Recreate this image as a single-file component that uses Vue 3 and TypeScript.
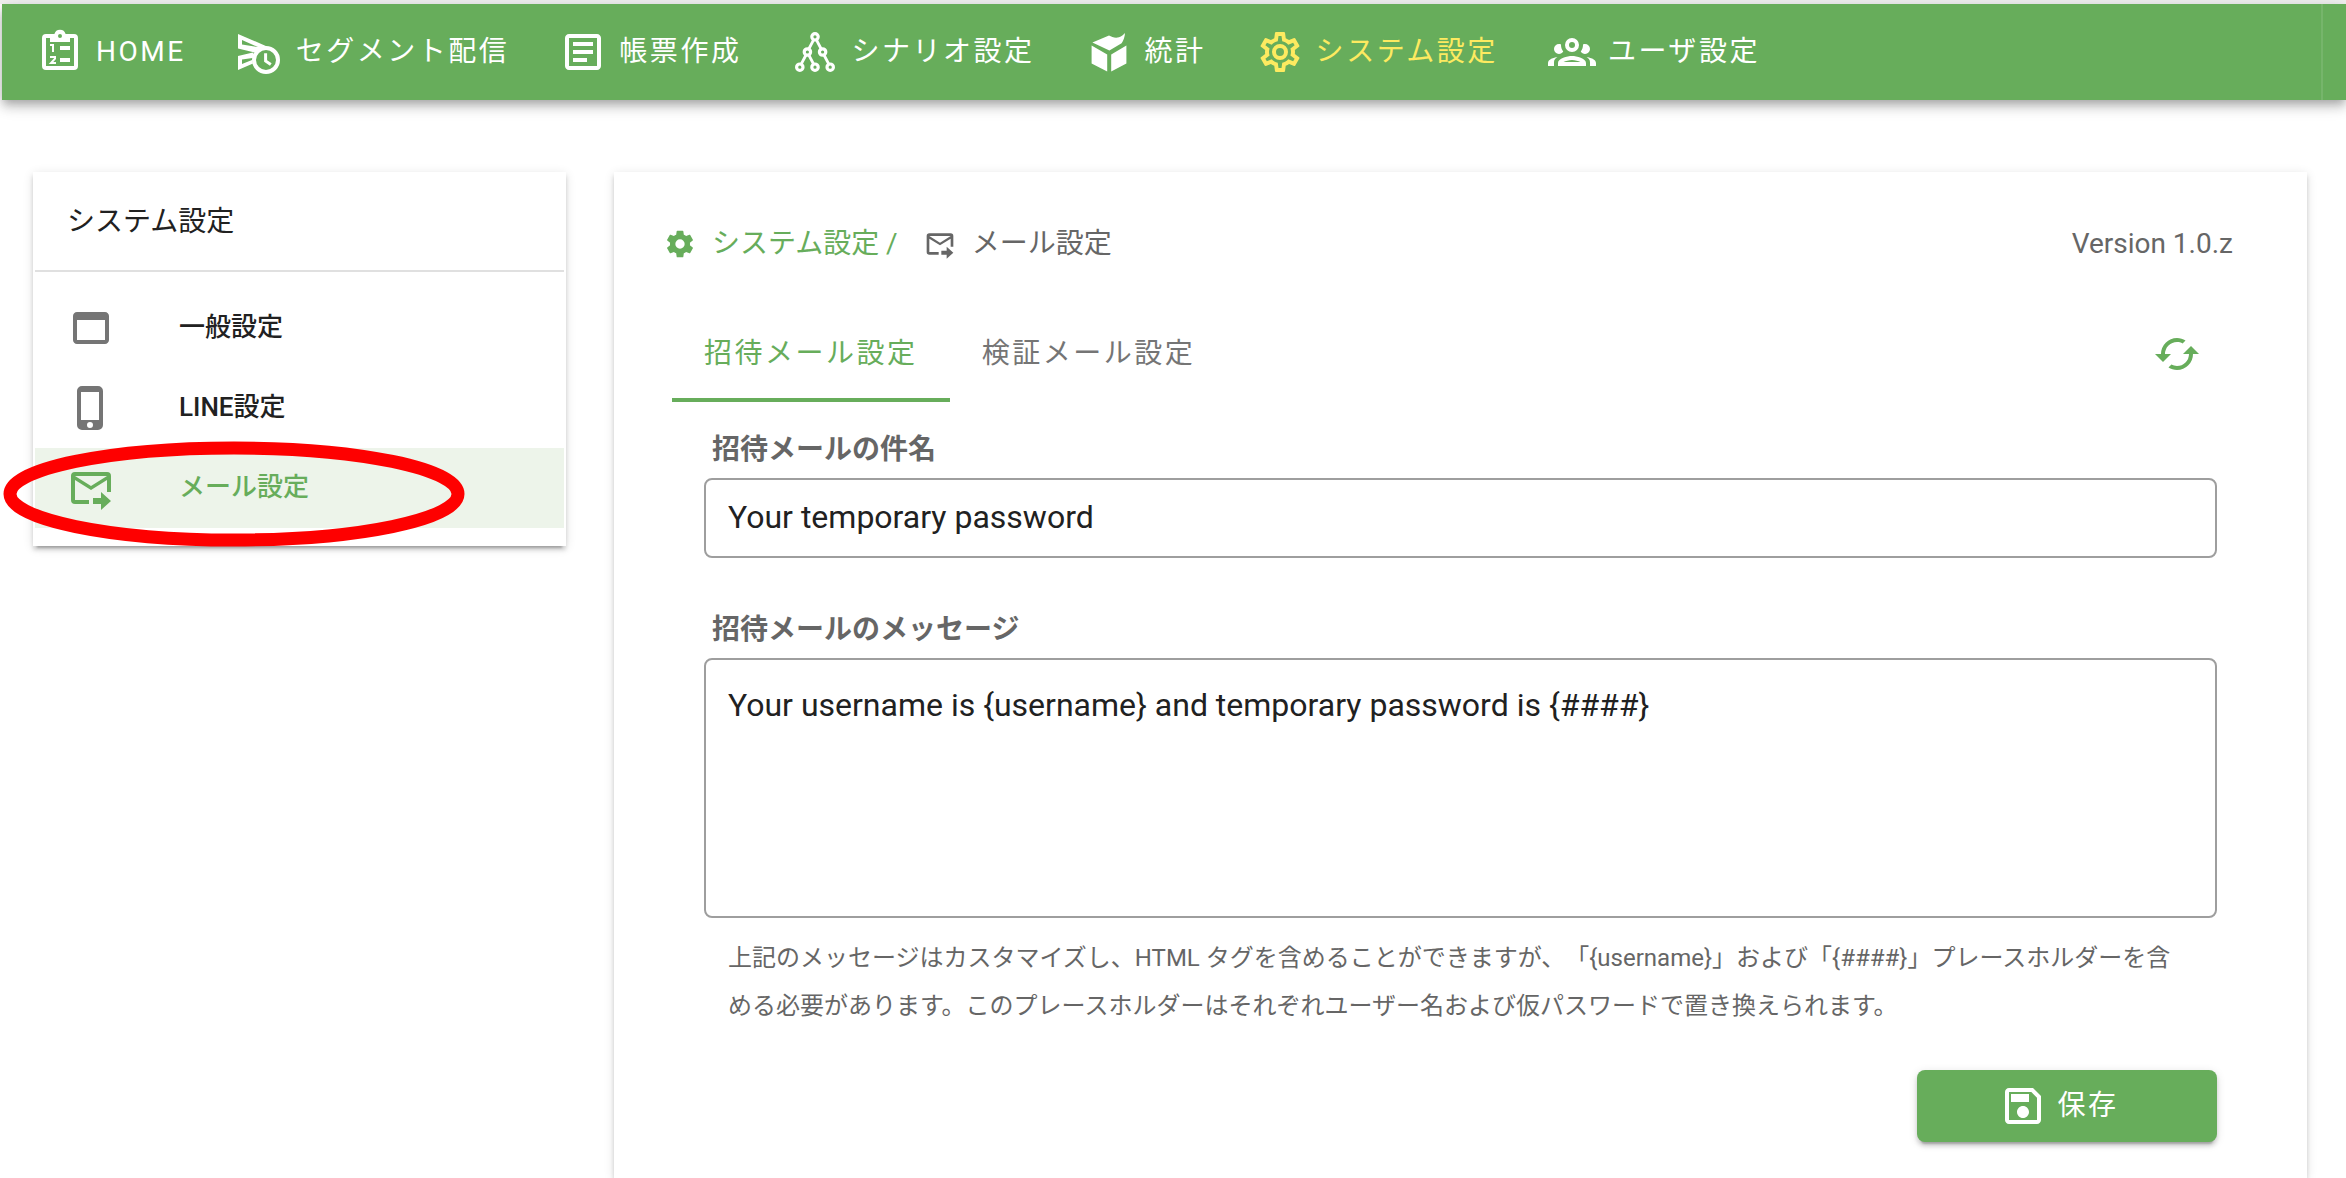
<script setup lang="ts">
import { ref } from 'vue'

interface NavItem {
  id: string
  label: string
  active?: boolean
}

interface MenuItem {
  label: string
  icon: string
  active?: boolean
}

const ICONS = {
  textBox:
    'M5,3C3.89,3 3,3.89 3,5V19C3,20.11 3.89,21 5,21H19C20.11,21 21,20.11 21,19V5C21,3.89 20.11,3 19,3H5M5,5H19V19H5V5M7,7V9H17V7H7M7,11V13H17V11H7M7,15V17H14V15H7Z',
  box: 'M3.3 8.8L11.1 13.2V21.8L3.3 17.7ZM13.1 13.2L20.7 8.8V17.7L13.1 21.8ZM3.7 7.2L12 3.8C13.5 4.6 15.3 5.2 17 4.6C18.3 4.2 19.2 3.4 20 2.5C19.9 4.4 19.3 6.2 18.3 7.6L12.2 11.3Z',
  cogOutline:
    'M12,8A4,4 0 0,1 16,12A4,4 0 0,1 12,16A4,4 0 0,1 8,12A4,4 0 0,1 12,8M12,10A2,2 0 0,0 10,12A2,2 0 0,0 12,14A2,2 0 0,0 14,12A2,2 0 0,0 12,10M10,22C9.75,22 9.54,21.82 9.5,21.58L9.13,18.93C8.5,18.68 7.96,18.34 7.44,17.94L4.95,18.95C4.73,19.03 4.46,18.95 4.34,18.73L2.34,15.27C2.21,15.05 2.27,14.78 2.46,14.63L4.57,12.97L4.5,12L4.57,11L2.46,9.37C2.27,9.22 2.21,8.95 2.34,8.73L4.34,5.27C4.46,5.05 4.73,4.96 4.95,5.05L7.44,6.05C7.96,5.66 8.5,5.32 9.13,5.07L9.5,2.42C9.54,2.18 9.75,2 10,2H14C14.25,2 14.46,2.18 14.5,2.42L14.87,5.07C15.5,5.32 16.04,5.66 16.56,6.05L19.05,5.05C19.27,4.96 19.54,5.05 19.66,5.27L21.66,8.73C21.79,8.95 21.73,9.22 21.54,9.37L19.43,11L19.5,12L19.43,13L21.54,14.63C21.73,14.78 21.79,15.05 21.66,15.27L19.66,18.73C19.54,18.95 19.27,19.04 19.05,18.95L16.56,17.95C16.04,18.34 15.5,18.68 14.87,18.93L14.5,21.58C14.46,21.82 14.25,22 14,22H10M11.25,4L10.88,6.61C9.68,6.86 8.62,7.5 7.85,8.39L5.44,7.35L4.69,8.65L6.8,10.2C6.4,11.37 6.4,12.64 6.8,13.8L4.68,15.36L5.43,16.66L7.86,15.62C8.63,16.5 9.68,17.14 10.87,17.38L11.24,20H12.76L13.13,17.39C14.32,17.14 15.37,16.5 16.14,15.62L18.57,16.66L19.32,15.36L17.2,13.81C17.6,12.64 17.6,11.37 17.2,10.2L19.31,8.65L18.56,7.35L16.15,8.39C15.38,7.5 14.32,6.86 13.12,6.62L12.75,4H11.25Z',
  cog: 'M12,15.5A3.5,3.5 0 0,1 8.5,12A3.5,3.5 0 0,1 12,8.5A3.5,3.5 0 0,1 15.5,12A3.5,3.5 0 0,1 12,15.5M19.43,12.97C19.47,12.65 19.5,12.33 19.5,12C19.5,11.67 19.47,11.34 19.43,11L21.54,9.37C21.73,9.22 21.78,8.95 21.66,8.73L19.66,5.27C19.54,5.05 19.27,4.96 19.05,5.05L16.56,6.05C16.04,5.66 15.5,5.32 14.87,5.07L14.5,2.42C14.46,2.18 14.25,2 14,2H10C9.75,2 9.54,2.18 9.5,2.42L9.13,5.07C8.5,5.32 7.96,5.66 7.44,6.05L4.95,5.05C4.73,4.96 4.46,5.05 4.34,5.27L2.34,8.73C2.21,8.95 2.27,9.22 2.46,9.37L4.57,11C4.53,11.34 4.5,11.67 4.5,12C4.5,12.33 4.53,12.65 4.57,12.97L2.46,14.63C2.27,14.78 2.21,15.05 2.34,15.27L4.34,18.73C4.46,18.95 4.73,19.03 4.95,18.95L7.44,17.94C7.96,18.34 8.5,18.68 9.13,18.93L9.5,21.58C9.54,21.82 9.75,22 10,22H14C14.25,22 14.46,21.82 14.5,21.58L14.87,18.93C15.5,18.67 16.04,18.34 16.56,17.94L19.05,18.95C19.27,19.03 19.54,18.95 19.66,18.73L21.66,15.27C21.78,15.05 21.73,14.78 21.54,14.63L19.43,12.97Z',
  group:
    'M12,5A3.5,3.5 0 0,0 8.5,8.5A3.5,3.5 0 0,0 12,12A3.5,3.5 0 0,0 15.5,8.5A3.5,3.5 0 0,0 12,5M12,7A1.5,1.5 0 0,1 13.5,8.5A1.5,1.5 0 0,1 12,10A1.5,1.5 0 0,1 10.5,8.5A1.5,1.5 0 0,1 12,7M5.5,8A2.5,2.5 0 0,0 3,10.5C3,11.44 3.53,12.25 4.29,12.68C4.65,12.88 5.06,13 5.5,13C5.94,13 6.35,12.88 6.71,12.68C7.08,12.47 7.39,12.17 7.62,11.81C6.89,10.86 6.5,9.7 6.5,8.5C6.5,8.41 6.5,8.31 6.5,8.22C6.2,8.08 5.86,8 5.5,8M18.5,8C18.14,8 17.8,8.08 17.5,8.22C17.5,8.31 17.5,8.41 17.5,8.5C17.5,9.7 17.11,10.86 16.38,11.81C16.5,12 16.63,12.15 16.78,12.3C16.94,12.45 17.1,12.58 17.29,12.68C17.65,12.88 18.06,13 18.5,13C18.94,13 19.35,12.88 19.71,12.68C20.47,12.25 21,11.44 21,10.5A2.5,2.5 0 0,0 18.5,8M12,14C9.66,14 5,15.17 5,17.5V19H19V17.5C19,15.17 14.34,14 12,14M4.71,14.55C2.78,14.78 0,15.76 0,17.5V19H3V17.07C3,16.06 3.69,15.22 4.71,14.55M19.29,14.55C20.31,15.22 21,16.06 21,17.07V19H24V17.5C24,15.76 21.22,14.78 19.29,14.55M12,16C13.53,16 15.24,16.5 16.23,17H7.77C8.76,16.5 10.47,16 12,16Z',
  window:
    'M19 4H5C3.89 4 3 4.9 3 6V18C3 19.1 3.89 20 5 20H19C20.1 20 21 19.1 21 18V6C21 4.9 20.1 4 19 4M19 18H5V8H19V18Z',
  phone:
    'M16,18H7V4H16M11.5,22A1.5,1.5 0 0,1 10,20.5A1.5,1.5 0 0,1 11.5,19A1.5,1.5 0 0,1 13,20.5A1.5,1.5 0 0,1 11.5,22M15.5,1H7.5A2.5,2.5 0 0,0 5,3.5V20.5A2.5,2.5 0 0,0 7.5,23H15.5A2.5,2.5 0 0,0 18,20.5V3.5A2.5,2.5 0 0,0 15.5,1Z',
  mail: 'M13 17H17V14L22 18.5L17 23V20H13V17M20 4H4A2 2 0 0 0 2 6V18A2 2 0 0 0 4 20H11V18H4V8L12 13L20 8V14H22V6A2 2 0 0 0 20 4M12 11L4 6H20Z',
  cached:
    'M19,8L15,12H18A6,6 0 0,1 12,18C11,18 10.03,17.75 9.2,17.3L7.74,18.76C8.97,19.54 10.43,20 12,20A8,8 0 0,0 20,12H23M6,12A6,6 0 0,1 12,6C13,6 13.97,6.25 14.8,6.7L16.26,5.24C15.03,4.46 13.57,4 12,4A8,8 0 0,0 4,12H1L5,16L9,12',
  save: 'M17 3H5C3.89 3 3 3.9 3 5V19C3 20.1 3.89 21 5 21H19C20.1 21 21 20.1 21 19V7L17 3M19 19H5V5H16.17L19 7.83V19M12 12C10.34 12 9 13.34 9 15S10.34 18 12 18 15 16.66 15 15 13.66 12 12 12M6 6H15V10H6V6Z',
}

const navPaths: Record<string, string> = {
  forms: ICONS.textBox,
  stats: ICONS.box,
  system: ICONS.cogOutline,
  users: ICONS.group,
}

const navItems: NavItem[] = [
  { id: 'home', label: 'HOME' },
  { id: 'segment', label: 'セグメント配信' },
  { id: 'forms', label: '帳票作成' },
  { id: 'scenario', label: 'シナリオ設定' },
  { id: 'stats', label: '統計' },
  { id: 'system', label: 'システム設定', active: true },
  { id: 'users', label: 'ユーザ設定' },
]

const menuItems: MenuItem[] = [
  { label: '一般設定', icon: ICONS.window },
  { label: 'LINE設定', icon: ICONS.phone },
  { label: 'メール設定', icon: ICONS.mail, active: true },
]

const tabs = ['招待メール設定', '検証メール設定']
const activeTab = ref(0)
const subject = ref('Your temporary password')
const message = ref('Your username is {username} and temporary password is {####}')
const hint =
  '上記のメッセージはカスタマイズし、HTML タグを含めることができますが、「{username}」および「{####}」プレースホルダーを含める必要があります。このプレースホルダーはそれぞれユーザー名および仮パスワードで置き換えられます。'
</script>

<template>
  <div class="page">
    <header class="topbar">
      <nav class="nav">
        <a
          v-for="item in navItems"
          :key="item.id"
          href="#"
          class="nav-item"
          :class="{ active: item.active }"
        >
          <svg v-if="item.id === 'home'" class="icon" viewBox="0 0 24 24" aria-hidden="true">
            <path
              fill-rule="evenodd"
              d="M5 3H9.2A2.9 2.9 0 0 1 14.8 3H19A2 2 0 0 1 21 5V19A2 2 0 0 1 19 21H5A2 2 0 0 1 3 19V5A2 2 0 0 1 5 3M5 5V19H19V5H17V7H7V5H5M12 3A1 1 0 1 0 12 5A1 1 0 1 0 12 3"
            />
            <g fill="none" stroke="currentColor">
              <polyline points="7,8.5 8.5,8.5 8.5,12" />
              <polyline points="7,14.5 9.5,14.5 9.5,15.3 7.5,17.5 10,17.5" />
            </g>
            <rect x="12" y="9" width="5" height="2" />
            <rect x="12" y="15" width="5" height="2" />
          </svg>
          <svg v-else-if="item.id === 'segment'" class="icon" viewBox="0 0 24 24" aria-hidden="true">
            <path
              fill-rule="evenodd"
              d="M1 3L15.5 9.2L12 11.4L9.2 13.6L8.3 12L1 10.3ZM3 6V8.3L11 9.5ZM1 14L9.5 12L8 16L8.5 17.8L1 21ZM3 15.7V18L8 16L8.3 15Z"
            />
            <circle cx="15" cy="16" r="6" fill="none" stroke="currentColor" stroke-width="2" />
            <polyline points="14.8,12.6 14.8,16.5 17.4,18.2" fill="none" stroke="currentColor" stroke-width="1.5" />
          </svg>
          <svg v-else-if="item.id === 'scenario'" class="icon" viewBox="0 0 24 24" aria-hidden="true">
            <g fill="none" stroke="currentColor" stroke-width="1.6">
              <circle cx="12" cy="4.4" r="1.6" />
              <circle cx="8.2" cy="12" r="1.6" />
              <circle cx="15.8" cy="12" r="1.6" />
              <circle cx="4.4" cy="19.6" r="1.6" />
              <circle cx="12" cy="19.6" r="1.6" />
              <circle cx="19.6" cy="19.6" r="1.6" />
              <path
                stroke-width="1.4"
                d="M11.3 5.9L8.9 10.5M12.7 5.9L15.1 10.5M7.5 13.5L5.1 18.1M8.9 13.5L11.3 18.1M16.5 13.5L18.9 18.1"
              />
            </g>
          </svg>
          <svg v-else class="icon" viewBox="0 0 24 24" aria-hidden="true">
            <path :d="navPaths[item.id]" />
          </svg>
          <span>{{ item.label }}</span>
        </a>
      </nav>
      <div class="topbar-end"></div>
    </header>

    <main class="content">
      <aside class="card sidebar">
        <h2 class="sidebar-title">システム設定</h2>
        <ul class="menu">
          <li v-for="item in menuItems" :key="item.label" class="menu-row">
            <a href="#" class="menu-item" :class="{ active: item.active }">
              <svg class="icon" viewBox="0 0 24 24" aria-hidden="true"><path :d="item.icon" /></svg>
              <span>{{ item.label }}</span>
            </a>
            <svg v-if="item.active" class="highlight" viewBox="0 0 462 106" aria-hidden="true">
              <ellipse cx="231" cy="53" rx="224" ry="46" />
            </svg>
          </li>
        </ul>
      </aside>

      <section class="card panel">
        <div class="panel-head">
          <nav class="breadcrumb" aria-label="breadcrumb">
            <a href="#" class="crumb crumb-link">
              <svg class="icon small" viewBox="0 0 24 24" aria-hidden="true"><path :d="ICONS.cog" /></svg>
              <span>システム設定 /</span>
            </a>
            <span class="crumb">
              <svg class="icon small" viewBox="0 0 24 24" aria-hidden="true"><path :d="ICONS.mail" /></svg>
              <span>メール設定</span>
            </span>
          </nav>
          <span class="version">Version 1.0.z</span>
        </div>

        <div class="tabbar">
          <div class="tabs" role="tablist">
            <button
              v-for="(tab, i) in tabs"
              :key="tab"
              type="button"
              role="tab"
              class="tab"
              :class="{ active: i === activeTab }"
              :aria-selected="i === activeTab"
              @click="activeTab = i"
            >
              {{ tab }}
            </button>
          </div>
          <button type="button" class="refresh" aria-label="更新">
            <svg class="icon" viewBox="0 0 24 24" aria-hidden="true"><path :d="ICONS.cached" /></svg>
          </button>
        </div>

        <form class="form" @submit.prevent>
          <label class="label" for="subject">招待メールの件名</label>
          <input id="subject" v-model="subject" class="field" type="text" />
          <label class="label second" for="message">招待メールのメッセージ</label>
          <textarea id="message" v-model="message" class="field area"></textarea>
          <p class="hint">{{ hint }}</p>
          <button type="submit" class="save">
            <svg class="icon" viewBox="0 0 24 24" aria-hidden="true"><path :d="ICONS.save" /></svg>
            <span>保存</span>
          </button>
        </form>
      </section>
    </main>
  </div>
</template>

<style>
body {
  margin: 0;
  background: #fff;
}
</style>

<style scoped>
.page {
  --green: #67ad5b;
  box-sizing: border-box;
  display: flex;
  flex-direction: column;
  min-height: 100vh;
  padding-top: 4px;
  overflow: hidden;
  background: linear-gradient(#f1f1f1 4px, #fff 4px);
  color: #212121;
  font-family: Roboto, 'Noto Sans CJK JP', sans-serif;
  font-size: 28px;
  line-height: 36px;
}

.icon {
  display: block;
  flex: none;
  width: 48px;
  height: 48px;
  fill: currentColor;
}

.icon.small {
  width: 32px;
  height: 32px;
}

button,
input,
textarea {
  font: inherit;
}

.topbar {
  display: flex;
  justify-content: space-between;
  height: 96px;
  margin-left: 2px;
  background: var(--green);
  box-shadow:
    0 4px 8px -2px rgba(0, 0, 0, 0.2),
    0 8px 10px rgba(0, 0, 0, 0.14),
    0 2px 20px rgba(0, 0, 0, 0.12);
}

.topbar-end {
  width: 23px;
  border-left: 2px solid #76b56b;
}

.nav {
  display: flex;
  align-items: center;
  gap: 50px;
  padding-left: 34px;
}

.nav-item {
  display: flex;
  align-items: center;
  gap: 12px;
  color: #fff;
  letter-spacing: 0.09em;
  text-decoration: none;
  white-space: nowrap;
}

.nav-item.active {
  color: #fdea60;
}

.content {
  display: grid;
  flex: 1;
  grid-template-columns: 533px minmax(0, 1fr);
  gap: 48px;
  padding: 72px 39px 0 33px;
}

.card {
  background: #fff;
  box-shadow:
    0 6px 2px -4px rgba(0, 0, 0, 0.2),
    0 4px 4px rgba(0, 0, 0, 0.14),
    0 2px 10px rgba(0, 0, 0, 0.12);
}

.sidebar {
  align-self: start;
  padding: 2px;
}

.sidebar-title {
  margin: 0;
  padding: 30px 32px;
  border-bottom: 2px solid #e0e0e0;
  font-size: 28px;
  font-weight: 400;
}

.menu {
  margin: 0;
  padding: 16px 0;
  list-style: none;
}

.menu-row {
  position: relative;
}

.menu-item {
  display: flex;
  align-items: center;
  gap: 64px;
  height: 80px;
  padding: 0 32px;
  color: #757575;
  font-size: 26px;
  font-weight: 500;
  text-decoration: none;
}

.menu-item span {
  padding-bottom: 2px;
  color: #212121;
}

.menu-item.active {
  background: #edf4ea;
}

.menu-item.active,
.menu-item.active span {
  color: var(--green);
}

.highlight {
  position: absolute;
  top: -7px;
  left: -32px;
  width: 462px;
  height: 106px;
  fill: none;
  stroke: #fe0000;
  stroke-width: 13px;
  pointer-events: none;
}

.panel {
  padding: 48px 0 36px;
}

.panel-head {
  display: flex;
  align-items: center;
  justify-content: space-between;
  height: 48px;
  padding: 0 74px 0 50px;
  color: #666;
}

.breadcrumb {
  display: flex;
  gap: 26px;
}

.crumb {
  display: flex;
  align-items: center;
  gap: 16px;
  color: #666;
  text-decoration: none;
}

.crumb-link {
  color: var(--green);
}

.tabbar {
  display: flex;
  align-items: center;
  justify-content: space-between;
  margin-top: 38px;
  padding: 0 106px 0 58px;
}

.tabs {
  display: flex;
}

.tab {
  height: 96px;
  padding: 4px 32px 0;
  border: 0;
  border-bottom: 4px solid transparent;
  background: none;
  color: #757575;
  letter-spacing: 0.09em;
}

.tab.active {
  border-color: var(--green);
  color: var(--green);
}

.refresh {
  padding: 0;
  border: 0;
  background: none;
  color: var(--green);
}

.form {
  display: flex;
  flex-direction: column;
  padding: 30px 90px 0;
}

.label {
  padding: 0 8px 10px;
  color: #666;
  font-weight: 700;
}

.label.second {
  margin-top: 54px;
}

.field {
  box-sizing: border-box;
  width: 100%;
  height: 80px;
  padding: 0 22px 2px;
  border: 2px solid #9e9e9e;
  border-radius: 8px;
  outline: 0;
  background: #fff;
  color: #212121;
  font-size: 32px;
  line-height: 40px;
}

.area {
  display: block;
  height: 260px;
  padding: 25px 22px;
  resize: none;
}

.hint {
  margin: 16px 32px 40px 24px;
  color: #666;
  font-size: 24px;
  line-height: 48px;
  text-spacing-trim: space-all;
}

.save {
  display: flex;
  align-items: center;
  align-self: flex-end;
  justify-content: center;
  gap: 10px;
  width: 300px;
  height: 72px;
  padding: 0 16px 0 0;
  border: 0;
  border-radius: 8px;
  background: var(--green);
  box-shadow:
    0 6px 2px -4px rgba(0, 0, 0, 0.2),
    0 4px 4px rgba(0, 0, 0, 0.14),
    0 2px 10px rgba(0, 0, 0, 0.12);
  color: #fff;
  letter-spacing: 0.09em;
}
</style>
